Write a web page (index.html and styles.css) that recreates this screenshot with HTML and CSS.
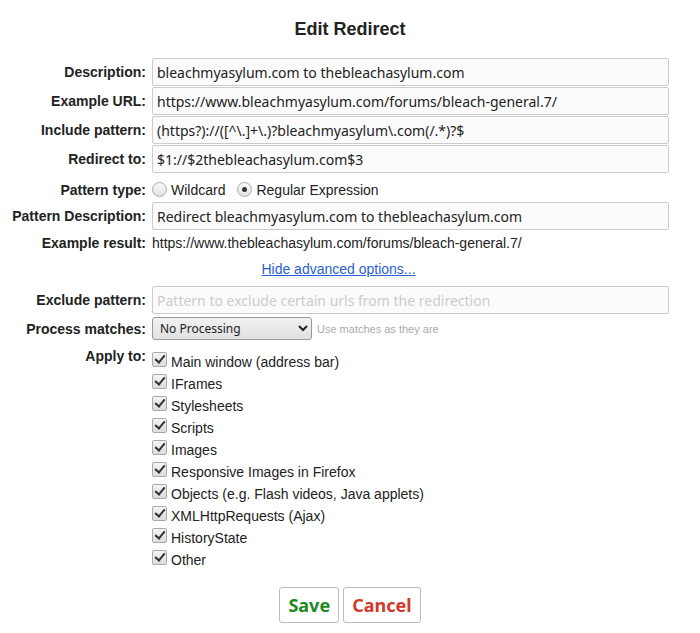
FILE: index.html
```html
<!DOCTYPE html>
<html lang="en">
<head>
    <meta charset="UTF-8">
    <title>Edit Redirect</title>
    <link rel="stylesheet" href="styles.css">
</head>
<body>
    <div class="container">
        <h1>Edit Redirect</h1>
        <form id="redirectForm">
            <div class="row field">
                <label for="description">Description:</label>
                <input type="text" id="description" value="bleachmyasylum.com to thebleachasylum.com">
            </div>
            <div class="row field">
                <label for="exampleUrl">Example URL:</label>
                <input type="text" id="exampleUrl" value="https://www.bleachmyasylum.com/forums/bleach-general.7/">
            </div>
            <div class="row field">
                <label for="includePattern">Include pattern:</label>
                <input type="text" id="includePattern" value="(https?)://([^\.]+\.)?bleachmyasylum\.com(/.*)?$">
            </div>
            <div class="row field">
                <label for="redirectTo">Redirect to:</label>
                <input type="text" id="redirectTo" value="$1://$2thebleachasylum.com$3">
            </div>
            <div class="row pattern-type">
                <label>Pattern type:</label>
                <div class="radios">
                    <label class="radio"><input type="radio" name="patternType" value="W"> Wildcard</label>
                    <label class="radio"><input type="radio" name="patternType" value="R" checked> Regular Expression</label>
                </div>
            </div>
            <div class="row field">
                <label for="patternDesc">Pattern Description:</label>
                <input type="text" id="patternDesc" value="Redirect bleachmyasylum.com to thebleachasylum.com">
            </div>
            <div class="row result">
                <label>Example result:</label>
                <span>https://www.thebleachasylum.com/forums/bleach-general.7/</span>
            </div>
            <div class="advanced-link">
                <a href="#">Hide advanced options...</a>
            </div>
            <div class="row field exclude">
                <label for="excludePattern">Exclude pattern:</label>
                <input type="text" id="excludePattern" placeholder="Pattern to exclude certain urls from the redirection">
            </div>
            <div class="row process">
                <label for="processMatches">Process matches:</label>
                <div class="select-wrap">
                    <select id="processMatches">
                        <option>No Processing</option>
                        <option>URL decode</option>
                        <option>URL encode</option>
                    </select>
                    <span class="hint">Use matches as they are</span>
                </div>
            </div>
            <div class="row apply">
                <label>Apply to:</label>
                <ul class="checks">
                    <li><label><input type="checkbox" checked> Main window (address bar)</label></li>
                    <li><label><input type="checkbox" checked> IFrames</label></li>
                    <li><label><input type="checkbox" checked> Stylesheets</label></li>
                    <li><label><input type="checkbox" checked> Scripts</label></li>
                    <li><label><input type="checkbox" checked> Images</label></li>
                    <li><label><input type="checkbox" checked> Responsive Images in Firefox</label></li>
                    <li><label><input type="checkbox" checked> Objects (e.g. Flash videos, Java applets)</label></li>
                    <li><label><input type="checkbox" checked> XMLHttpRequests (Ajax)</label></li>
                    <li><label><input type="checkbox" checked> HistoryState</label></li>
                    <li><label><input type="checkbox" checked> Other</label></li>
                </ul>
            </div>
            <div class="buttons">
                <button type="submit" class="save">Save</button>
                <button type="button" class="cancel">Cancel</button>
            </div>
        </form>
    </div>
</body>
</html>
```

FILE: styles.css
```css
body {
    margin: 0;
    font-family: "Liberation Sans", Arial, sans-serif;
    font-size: 14px;
    color: #222;
    background: #fff;
}
.container {
    padding: 17px 31px 0 8px;
}
h1 {
    margin: 0 0 17px 0;
    padding-left: 23px;
    text-align: center;
    font-size: 18px;
    line-height: 24px;
    color: #222;
}
.row {
    display: grid;
    grid-template-columns: 138px 1fr;
    column-gap: 6px;
    align-items: center;
}
.row > label {
    text-align: right;
    font-weight: bold;
    white-space: nowrap;
}
.field {
    margin-bottom: 1px;
}
.field input {
    height: 28px;
    box-sizing: border-box;
    padding: 0 4px;
    border: 1px solid #ccc;
    border-radius: 2px;
    background: #fbfbfb;
    font-family: "Noto Sans", "Open Sans", sans-serif;
    font-size: 14px;
    color: #222;
}
.field input::placeholder {
    color: #ccc;
}
.pattern-type {
    margin: 5px 0 1px 0;
    height: 23px;
}
.radios {
    display: flex;
    gap: 12px;
}
.radio {
    display: flex;
    align-items: center;
    gap: 4px;
}
.radio input {
    appearance: none;
    margin: 0;
    width: 15px;
    height: 15px;
    border: 1px solid #aaa;
    border-radius: 50%;
    background: linear-gradient(#fafafa, #e2e2e2);
    box-sizing: border-box;
    position: relative;
}
.radio input:checked::after {
    content: "";
    position: absolute;
    left: 4px;
    top: 4px;
    width: 5px;
    height: 5px;
    border-radius: 50%;
    background: #333;
}
.result {
    margin-top: 5px;
    height: 16px;
}
.advanced-link {
    text-align: center;
    margin: 9px 0 8px 0;
    line-height: 18px;
}
.advanced-link a {
    color: #2a5fd4;
}
.exclude {
    margin-bottom: 3px;
}
.select-wrap {
    display: flex;
    align-items: center;
    gap: 5px;
}
select {
    width: 160px;
    height: 23px;
    border: 1px solid #999;
    border-radius: 3px;
    background: linear-gradient(#f2f2f2, #e0e0e0);
    font-family: "Noto Sans", "Open Sans", sans-serif;
    font-size: 12px;
    color: #222;
    padding: 0 3px;
}
.hint {
    font-size: 11px;
    color: #aaa;
}
.apply {
    align-items: start;
    margin-top: 8px;
}
.apply > label {
    padding-top: 0;
}
.checks {
    list-style: none;
    margin: 0;
    padding: 0;
}
.checks li {
    height: 22px;
    display: flex;
    align-items: flex-end;
}
.checks label {
    display: flex;
    align-items: center;
    gap: 4px;
}
.checks input {
    appearance: none;
    margin: 0;
    width: 15px;
    height: 15px;
    border: 1px solid #aaa;
    border-radius: 2px;
    background: linear-gradient(#f4f4f4, #dcdcdc);
    box-sizing: border-box;
    position: relative;
    top: -3px;
}
.checks input:checked::after {
    content: "";
    position: absolute;
    left: 4px;
    top: 0px;
    width: 4px;
    height: 8px;
    border: solid #333;
    border-width: 0 2.5px 2.5px 0;
    transform: rotate(40deg);
}
.buttons {
    display: flex;
    justify-content: center;
    gap: 4px;
    margin-top: 19px;
    padding-left: 23px;
}
.buttons button {
    height: 36px;
    padding: 0 8px;
    border: 1px solid #bbb;
    border-radius: 3px;
    background: #fff;
    font-family: "Noto Sans", "Open Sans", sans-serif;
    font-size: 18px;
    font-weight: bold;
    cursor: pointer;
}
.save {
    color: #1d8a1d;
}
.cancel {
    color: #d0392b;
}
```
